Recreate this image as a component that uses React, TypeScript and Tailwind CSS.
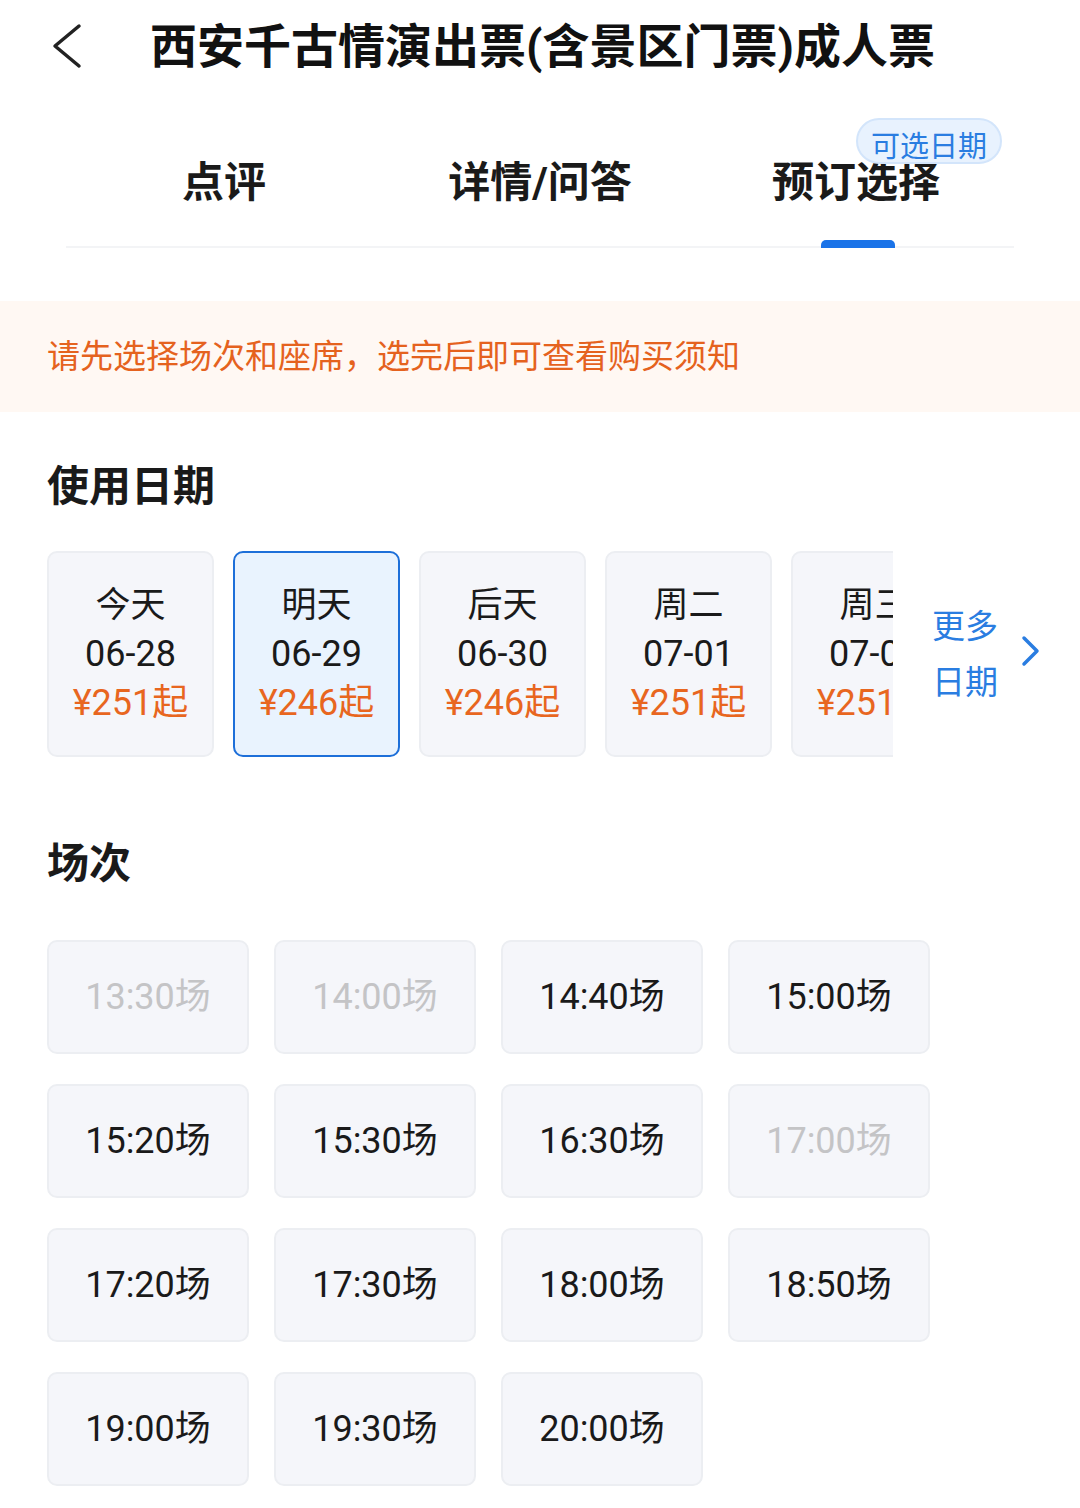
import React from "react";

const FONT = { fontFamily: 'Roboto, "Noto Sans CJK SC", "Noto Sans", sans-serif' };

const dates = [
  { d: "今天", md: "06-28", p: "¥251起", sel: false },
  { d: "明天", md: "06-29", p: "¥246起", sel: true },
  { d: "后天", md: "06-30", p: "¥246起", sel: false },
  { d: "周二", md: "07-01", p: "¥251起", sel: false },
  { d: "周三", md: "07-02", p: "¥251起", sel: false },
];

const slots = [
  { t: "13:30场", off: true },
  { t: "14:00场", off: true },
  { t: "14:40场", off: false },
  { t: "15:00场", off: false },
  { t: "15:20场", off: false },
  { t: "15:30场", off: false },
  { t: "16:30场", off: false },
  { t: "17:00场", off: true },
  { t: "17:20场", off: false },
  { t: "17:30场", off: false },
  { t: "18:00场", off: false },
  { t: "18:50场", off: false },
  { t: "19:00场", off: false },
  { t: "19:30场", off: false },
  { t: "20:00场", off: false },
];

export default function App() {
  return (
    <div className="w-[1080px] h-[1508px] bg-white overflow-hidden text-[#1a1a1a]" style={FONT}>
      {/* Header */}
      <div className="h-[92px] flex items-center">
        <svg className="ml-[48px]" width="36" height="48" viewBox="0 0 36 48" fill="none">
          <path d="M31 4 L7 24 L31 44" stroke="#222" strokeWidth="3.5" strokeLinecap="round" strokeLinejoin="round" />
        </svg>
        <div className="ml-[66px] h-[48px] flex items-center text-[47px] font-bold leading-none text-[#111] whitespace-nowrap">
          西安千古情演出票(含景区门票)成人票
        </div>
      </div>

      {/* Tabs */}
      <div className="relative mx-[66px] h-[156px] border-b-2 border-[#f3f4f6] grid grid-cols-3">
        <div className="flex justify-center items-start pt-[70px]">
          <span className="h-[42px] flex items-center text-[42px] font-bold leading-none text-[#1a1a1a]">点评</span>
        </div>
        <div className="flex justify-center items-start pt-[70px]">
          <span className="h-[42px] flex items-center text-[42px] font-bold leading-none text-[#1a1a1a]">详情/问答</span>
        </div>
        <div className="relative flex justify-center items-start pt-[70px]">
          <span className="h-[42px] flex items-center text-[42px] font-bold leading-none text-[#1a1a1a]">预订选择</span>
          <div className="absolute left-[123px] bottom-[-2px] w-[74px] h-[8px] rounded-t-[5px] bg-[#1a73e8]" />
          <div className="absolute left-[158px] top-[26px] h-[46px] w-[146px] rounded-full bg-[#e8f2fe] border-2 border-[#d3e5fb] flex items-start justify-center pt-[13px] text-[29px] leading-none text-[#2a7de1] whitespace-nowrap overflow-hidden">
            可选日期
          </div>
        </div>
      </div>

      {/* Banner */}
      <div className="mt-[53px] h-[111px] bg-[#fff8f3] flex items-center px-[47px] text-[33px] text-[#e5621e] leading-none whitespace-nowrap">
        请先选择场次和座席，选完后即可查看购买须知
      </div>

      {/* Date section */}
      <div className="px-[47px]">
        <div className="mt-[54px] h-[42px] flex items-center text-[42px] font-bold leading-none">使用日期</div>
        <div className="mt-[43px] flex items-center">
          <div className="w-[846px] overflow-hidden flex gap-[19px] shrink-0">
            {dates.map((x) => (
              <div
                key={x.md}
                className={
                  x.sel
                    ? "shrink-0 w-[167px] h-[206px] rounded-[10px] border-2 border-[#1d6fd9] bg-[#e9f3fe] flex flex-col items-center justify-center text-[36px] leading-none"
                    : "shrink-0 w-[167px] h-[206px] rounded-[10px] border-2 border-[#eceef2] bg-[#f5f6fa] flex flex-col items-center justify-center text-[36px] leading-none"
                }
              >
                <div className="h-[49px] flex items-center text-[35px] text-[#1a1a1a]">{x.d}</div>
                <div className="h-[49px] flex items-center text-[#1a1a1a] whitespace-nowrap">{x.md}</div>
                <div className="h-[49px] flex items-center text-[#e8661f] whitespace-nowrap">{x.p}</div>
              </div>
            ))}
          </div>
          <div className="ml-[39px] flex items-center shrink-0">
            <div className="text-[33px] leading-none text-[#2a7de1] flex flex-col whitespace-nowrap">
              <span className="h-[56px] flex items-center">更多</span>
              <span className="h-[56px] flex items-center">日期</span>
            </div>
            <svg className="ml-[22px] mt-[-6px]" width="22" height="34" viewBox="0 0 22 34" fill="none">
              <path d="M4 4 L17 17 L4 30" stroke="#2a7de1" strokeWidth="3.5" strokeLinecap="round" strokeLinejoin="round" />
            </svg>
          </div>
        </div>

        {/* Sessions */}
        <div className="mt-[86px] h-[42px] flex items-center text-[42px] font-bold leading-none">场次</div>
        <div className="mt-[55px] grid grid-cols-[202px_202px_202px_202px] gap-x-[25px] gap-y-[30px]">
          {slots.map((s) => (
            <div
              key={s.t}
              className={
                s.off
                  ? "h-[114px] rounded-[10px] border-2 border-[#eceef2] bg-[#f5f6fa] flex items-center justify-center text-[36px] leading-none text-[#c4c4c6]"
                  : "h-[114px] rounded-[10px] border-2 border-[#eceef2] bg-[#f5f6fa] flex items-center justify-center text-[36px] leading-none text-[#1a1a1a]"
              }
            >
              {s.t}
            </div>
          ))}
        </div>
      </div>
    </div>
  );
}
